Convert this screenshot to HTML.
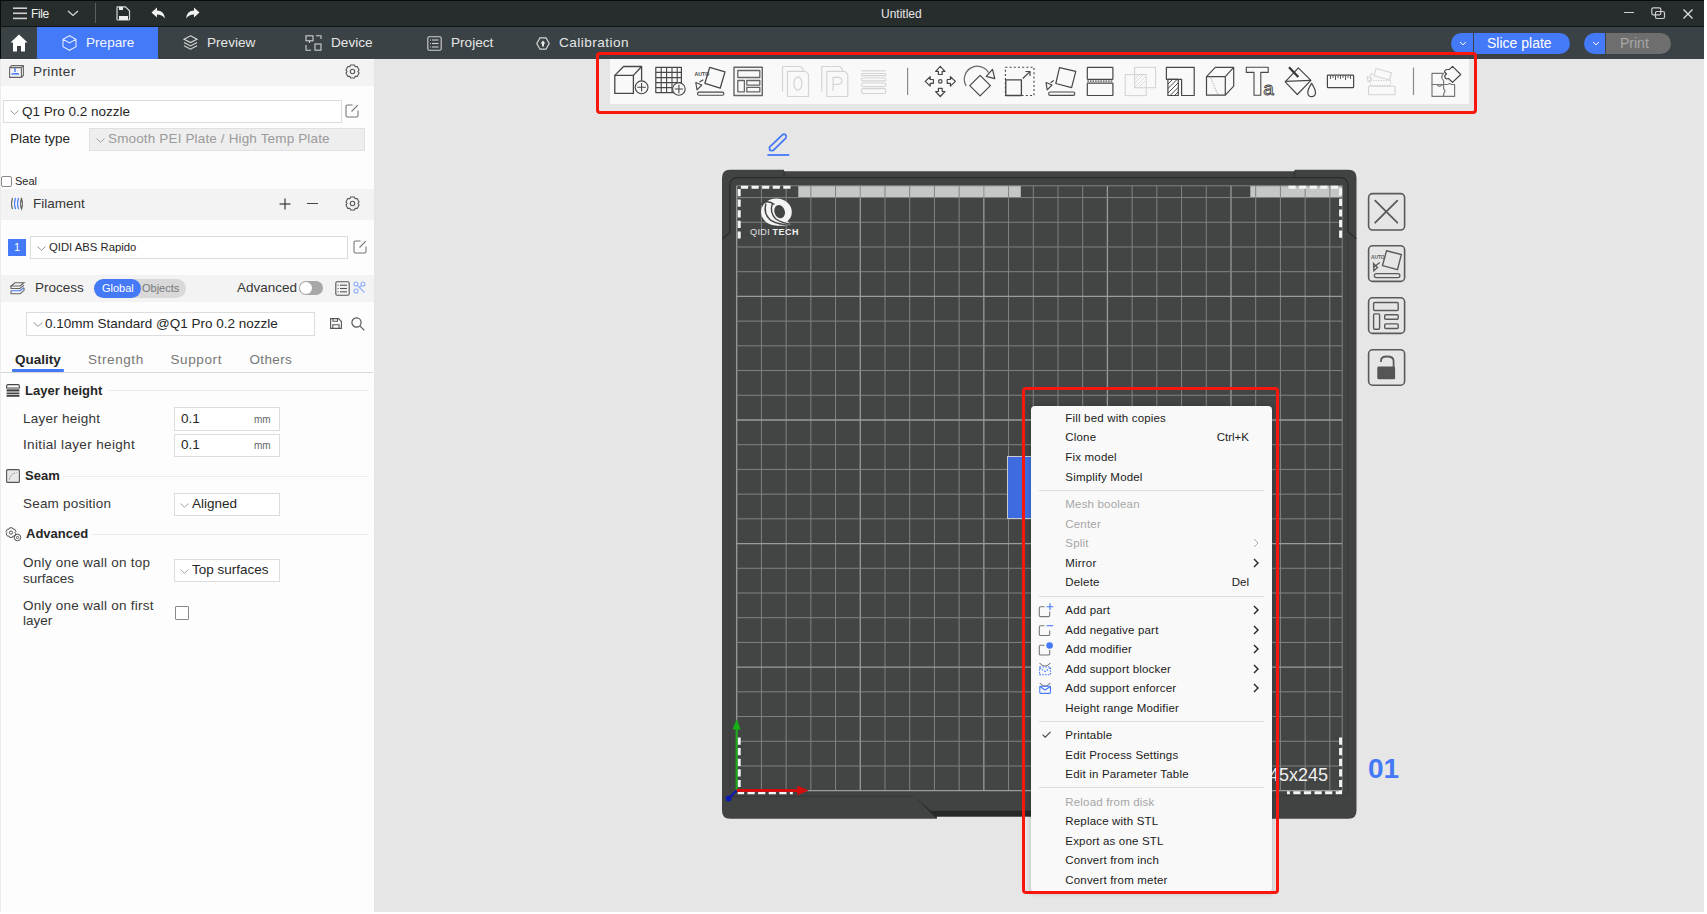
<!DOCTYPE html>
<html><head><meta charset="utf-8">
<style>
*{box-sizing:border-box;margin:0;padding:0}
html,body{width:1707px;height:914px;overflow:hidden;background:#fff;font-family:"Liberation Sans",sans-serif}
.a{position:absolute}
.t{position:absolute;white-space:nowrap;line-height:1}
svg{position:absolute;overflow:visible}
</style></head>
<body>
<!-- title bar -->
<div class="a" style="left:0;top:0;width:1704px;height:27px;background:#272c2d;border-top:1px solid #0a0c0c;border-left:1px solid #0a0c0c;border-bottom:1px solid #111415"></div>
<!-- nav bar -->
<div class="a" style="left:0;top:27px;width:1704px;height:32px;background:#3b4245;border-left:1px solid #0a0c0c"></div>
<div class="a" style="left:37px;top:27px;width:121px;height:32px;background:#4479f7"></div>
<!-- left panel -->
<div class="a" style="left:0;top:59px;width:374px;height:853px;background:#fdfdfd;border-left:1px solid #ececec"></div>
<!-- canvas -->
<div class="a" style="left:374px;top:59px;width:1330px;height:853px;background:#e6e6e6"></div>

<!-- section bands -->
<div class="a" style="left:1px;top:60px;width:373px;height:26px;background:#f3f3f3"></div>
<div class="a" style="left:1px;top:189px;width:373px;height:30.5px;background:#f3f3f3"></div>
<div class="a" style="left:1px;top:275px;width:373px;height:26.5px;background:#f3f3f3"></div>


<!-- ===== TITLE BAR CONTENT ===== -->
<svg style="left:13px;top:7px" width="15" height="13" viewBox="0 0 15 13"><g stroke="#d0d0d0" stroke-width="1.6"><line x1="0" y1="1.2" x2="14" y2="1.2"/><line x1="0" y1="6.3" x2="14" y2="6.3"/><line x1="0" y1="11.4" x2="14" y2="11.4"/></g></svg>
<div class="t" style="left:31px;top:8px;font-size:12px;color:#f0f0f0;letter-spacing:-0.4px">File</div>
<svg style="left:67px;top:10px" width="12" height="7" viewBox="0 0 12 7"><polyline points="1,1 6,5.5 11,1" fill="none" stroke="#d8d8d8" stroke-width="1.3"/></svg>
<div class="a" style="left:95px;top:3px;width:1px;height:20px;background:#5a5f60"></div>
<svg style="left:116px;top:6px" width="15" height="15" viewBox="0 0 15 15"><path d="M1,1.5 Q1,0.8 1.7,0.8 H9.5 L13.5,4.8 V13.3 Q13.5,14 12.8,14 H1.7 Q1,14 1,13.3 Z" fill="none" stroke="#d8d8d8" stroke-width="1.2"/><rect x="3" y="1" width="4" height="3" fill="#eee"/><rect x="3" y="10" width="9" height="4" fill="#eee"/></svg>
<svg style="left:151px;top:7px" width="15" height="12" viewBox="0 0 15 12"><path d="M0.5,5.5 L6,0.5 V3.5 Q13,3.5 14,11.5 Q11,7.5 6,7.5 V10.5 Z" fill="#f2f2f2"/></svg>
<svg style="left:185px;top:7px" width="15" height="12" viewBox="0 0 15 12"><path d="M14.5,5.5 L9,0.5 V3.5 Q2,3.5 1,11.5 Q4,7.5 9,7.5 V10.5 Z" fill="#f2f2f2"/></svg>
<div class="t" style="left:881px;top:8px;font-size:12px;color:#e8e8e8">Untitled</div>
<div class="a" style="left:1624px;top:12px;width:10px;height:1.3px;background:#d0d0d0"></div>
<svg style="left:1651px;top:7px" width="15" height="13" viewBox="0 0 15 13"><rect x="0.8" y="0.8" width="9" height="7" rx="1.5" fill="none" stroke="#cfcfcf" stroke-width="1.2"/><rect x="4.5" y="4.5" width="9" height="7" rx="1.5" fill="none" stroke="#cfcfcf" stroke-width="1.2"/></svg>
<svg style="left:1683px;top:9px" width="10" height="10" viewBox="0 0 10 10"><g stroke="#e0e0e0" stroke-width="1.2"><line x1="0.5" y1="0.5" x2="9.5" y2="9.5"/><line x1="9.5" y1="0.5" x2="0.5" y2="9.5"/></g></svg>

<!-- ===== NAV BAR CONTENT ===== -->
<svg style="left:10px;top:34px" width="18" height="18" viewBox="0 0 18 18"><path d="M9,0.5 L17.5,8.5 H15 V17.5 H11 V12 H7 V17.5 H3 V8.5 H0.5 Z" fill="#fff"/></svg>
<svg style="left:62px;top:35px" width="15" height="16" viewBox="0 0 15 16"><path d="M7.5,0.7 L14,4.3 V11.7 L7.5,15.3 L1,11.7 V4.3 Z M1,4.3 L7.5,7.9 L14,4.3" fill="none" stroke="#dfe8ff" stroke-width="1.1"/></svg>
<div class="t" style="left:86px;top:36px;font-size:13.6px;color:#f4f7ff">Prepare</div>
<svg style="left:183px;top:35px" width="15" height="16" viewBox="0 0 15 16"><path d="M7.5,0.8 L14,4.2 L7.5,7.6 L1,4.2 Z" fill="none" stroke="#d8d8d8" stroke-width="1.1"/><path d="M1,7.5 L7.5,10.9 L14,7.5 M1,10.8 L7.5,14.2 L14,10.8" fill="none" stroke="#d8d8d8" stroke-width="1.1"/></svg>
<div class="t" style="left:207px;top:36px;font-size:13.6px;color:#e6e6e6">Preview</div>
<svg style="left:305px;top:35px" width="17" height="16" viewBox="0 0 17 16"><g fill="none" stroke="#d0d0d0" stroke-width="1.1"><rect x="1" y="0.8" width="7" height="5" /><line x1="4.5" y1="5.8" x2="4.5" y2="8"/><rect x="10" y="9" width="6" height="6.2"/><polyline points="11,0.8 16,0.8 16,4"/><polyline points="1,10 1,15.2 6,15.2"/></g></svg>
<div class="t" style="left:331px;top:36px;font-size:13.6px;color:#e6e6e6">Device</div>
<svg style="left:427px;top:36px" width="15" height="15" viewBox="0 0 15 15"><g fill="none" stroke="#d0d0d0" stroke-width="1.1"><rect x="0.8" y="0.8" width="13.4" height="13.4" rx="1.5"/><line x1="5" y1="4" x2="11.5" y2="4"/><line x1="5" y1="7.5" x2="11.5" y2="7.5"/><line x1="5" y1="11" x2="11.5" y2="11"/><line x1="3" y1="4" x2="4" y2="4"/><line x1="3" y1="7.5" x2="4" y2="7.5"/><line x1="3" y1="11" x2="4" y2="11"/></g></svg>
<div class="t" style="left:451px;top:36px;font-size:13.6px;color:#e6e6e6">Project</div>
<svg style="left:536px;top:37px" width="14" height="13" viewBox="0 0 14 13"><path d="M4,0.8 H10 L13.2,6.5 L10,12.2 H4 L0.8,6.5 Z" fill="none" stroke="#d8d8d8" stroke-width="1.2"/><path d="M7,3.5 L9.5,6.5 H8 V9.5 H6 V6.5 H4.5 Z" fill="#e8e8e8"/></svg>
<div class="t" style="left:559px;top:36px;font-size:13.6px;color:#e6e6e6;letter-spacing:0.45px">Calibration</div>

<!-- slice / print buttons -->
<div class="a" style="left:1451px;top:33px;width:22px;height:21px;background:#4479f7;border-radius:11px 0 0 11px"></div>
<div class="a" style="left:1474px;top:33px;width:96px;height:21px;background:#4479f7;border-radius:0 11px 11px 0"></div>
<svg style="left:1459px;top:41px" width="8" height="5" viewBox="0 0 8 5"><polyline points="1,1 4,3.8 7,1" fill="none" stroke="#fff" stroke-width="1"/></svg>
<div class="t" style="left:1487px;top:36px;font-size:14px;color:#fff">Slice plate</div>
<div class="a" style="left:1584px;top:33px;width:21px;height:21px;background:#4479f7;border-radius:11px 0 0 11px"></div>
<div class="a" style="left:1606px;top:33px;width:65px;height:21px;background:#6e6e6e;border-radius:0 11px 11px 0"></div>
<svg style="left:1592px;top:41px" width="8" height="5" viewBox="0 0 8 5"><polyline points="1,1 4,3.8 7,1" fill="none" stroke="#fff" stroke-width="1"/></svg>
<div class="t" style="left:1620px;top:36px;font-size:14px;color:#a9a9a9">Print</div>


<!-- ===== LEFT PANEL CONTENT ===== -->
<!-- Printer -->
<svg style="left:9px;top:65px" width="15" height="13" viewBox="0 0 15 13"><g fill="none" stroke="#666" stroke-width="1.1"><path d="M0.6,2.6 L2.6,0.6 H14.4 V10.4 L12.4,12.4 H0.6 Z M0.6,2.6 H12.4 V12.4 M12.4,2.6 L14.4,0.6"/></g><path d="M6,3 V7 M2.5,9 Q6,8.6 10,9" stroke="#4479f7" stroke-width="1.4" fill="none"/></svg>
<div class="t" style="left:33px;top:65px;font-size:13.5px;color:#363636;letter-spacing:0.4px">Printer</div>
<svg style="left:345px;top:64px" width="15" height="15" viewBox="0 0 15 15"><path d="M5.6,1 H9.4 L10.2,2.8 L12.2,2.6 L14.1,5.9 L12.9,7.5 L14.1,9.1 L12.2,12.4 L10.2,12.2 L9.4,14 H5.6 L4.8,12.2 L2.8,12.4 L0.9,9.1 L2.1,7.5 L0.9,5.9 L2.8,2.6 L4.8,2.8 Z" fill="none" stroke="#555" stroke-width="1.1" stroke-linejoin="round"/><circle cx="7.5" cy="7.5" r="2.2" fill="none" stroke="#555" stroke-width="1.1"/></svg>

<div class="a" style="left:3px;top:100px;width:339px;height:23px;border:1px solid #dcdcdc;background:#fff"></div>
<svg style="left:10px;top:110px" width="9" height="5" viewBox="0 0 9 5"><polyline points="0.5,0.5 4.5,4.3 8.5,0.5" fill="none" stroke="#888" stroke-width="0.9"/></svg>
<div class="t" style="left:22px;top:105px;font-size:13.5px;color:#262626">Q1 Pro 0.2 nozzle</div>
<svg style="left:345px;top:104px" width="14" height="14" viewBox="0 0 14 14"><path d="M7.5,1 H2.5 Q1,1 1,2.5 V11.5 Q1,13 2.5,13 H11.5 Q13,13 13,11.5 V6.5" fill="none" stroke="#777" stroke-width="1.1"/><line x1="6.5" y1="7.5" x2="12.8" y2="1.2" stroke="#777" stroke-width="1.1"/></svg>

<div class="t" style="left:10px;top:132px;font-size:13.5px;color:#262626">Plate type</div>
<div class="a" style="left:89px;top:128px;width:276px;height:23px;border:1px solid #e0e0e0;background:#eeeeee"></div>
<svg style="left:96px;top:138px" width="9" height="5" viewBox="0 0 9 5"><polyline points="0.5,0.5 4.5,4.3 8.5,0.5" fill="none" stroke="#999" stroke-width="0.9"/></svg>
<div class="t" style="left:108px;top:132px;font-size:13.5px;color:#9a9a9a;letter-spacing:0.15px">Smooth PEI Plate / High Temp Plate</div>

<div class="a" style="left:1px;top:176px;width:11px;height:11px;border:1px solid #8a8a8a;border-radius:2px;background:#fff"></div>
<div class="t" style="left:15px;top:176px;font-size:11px;color:#262626">Seal</div>

<!-- Filament -->
<svg style="left:10px;top:197px" width="14" height="13" viewBox="0 0 14 13"><g fill="none" stroke-width="1.1"><path d="M2.5,0.8 Q0.6,6.5 2.5,12.2" stroke="#666"/><path d="M5.5,0.8 Q3.6,6.5 5.5,12.2" stroke="#4479f7"/><path d="M8.5,0.8 Q6.6,6.5 8.5,12.2" stroke="#4479f7"/><path d="M11.5,0.8 Q13.4,6.5 11.5,12.2 Q9.6,6.5 11.5,0.8" stroke="#666"/></g></svg>
<div class="t" style="left:33px;top:197px;font-size:13.5px;color:#363636">Filament</div>
<svg style="left:279px;top:198px" width="12" height="12" viewBox="0 0 12 12"><g stroke="#444" stroke-width="1.3"><line x1="6" y1="0.5" x2="6" y2="11.5"/><line x1="0.5" y1="6" x2="11.5" y2="6"/></g></svg>
<div class="a" style="left:307px;top:203px;width:11px;height:1.3px;background:#444"></div>
<svg style="left:345px;top:196px" width="15" height="15" viewBox="0 0 15 15"><path d="M5.6,1 H9.4 L10.2,2.8 L12.2,2.6 L14.1,5.9 L12.9,7.5 L14.1,9.1 L12.2,12.4 L10.2,12.2 L9.4,14 H5.6 L4.8,12.2 L2.8,12.4 L0.9,9.1 L2.1,7.5 L0.9,5.9 L2.8,2.6 L4.8,2.8 Z" fill="none" stroke="#555" stroke-width="1.1" stroke-linejoin="round"/><circle cx="7.5" cy="7.5" r="2.2" fill="none" stroke="#555" stroke-width="1.1"/></svg>

<div class="a" style="left:8px;top:239px;width:18px;height:17px;background:#4479f7"></div>
<div class="t" style="left:14px;top:242px;font-size:11px;color:#fff">1</div>
<div class="a" style="left:30px;top:236px;width:318px;height:23px;border:1px solid #dcdcdc;background:#fff"></div>
<svg style="left:37px;top:246px" width="9" height="5" viewBox="0 0 9 5"><polyline points="0.5,0.5 4.5,4.3 8.5,0.5" fill="none" stroke="#888" stroke-width="0.9"/></svg>
<div class="t" style="left:49px;top:241.5px;font-size:11.3px;color:#262626">QIDI ABS Rapido</div>
<svg style="left:353px;top:240px" width="14" height="14" viewBox="0 0 14 14"><path d="M7.5,1 H2.5 Q1,1 1,2.5 V11.5 Q1,13 2.5,13 H11.5 Q13,13 13,11.5 V6.5" fill="none" stroke="#777" stroke-width="1.1"/><line x1="6.5" y1="7.5" x2="12.8" y2="1.2" stroke="#777" stroke-width="1.1"/></svg>

<!-- Process -->
<svg style="left:10px;top:282px" width="15" height="13" viewBox="0 0 15 13"><g fill="none" stroke-width="1.1"><path d="M1,4 L5,0.8 H14 L10,4 Z" stroke="#666"/><path d="M1,4 V6.5 H10 L14,3.3" stroke="#666"/><path d="M1,8.8 H10 L14,5.6" stroke="#4479f7"/><path d="M1,8.8 V11.8 H10 L14,8.6 V6" stroke="#666"/></g></svg>
<div class="t" style="left:35px;top:281px;font-size:13.5px;color:#363636">Process</div>
<div class="a" style="left:94px;top:279px;width:92px;height:19px;background:#d9d9d9;border-radius:10px"></div>
<div class="a" style="left:94px;top:279px;width:47px;height:19px;background:#4479f7;border-radius:10px"></div>
<div class="t" style="left:102px;top:283px;font-size:11px;color:#fff">Global</div>
<div class="t" style="left:142px;top:283px;font-size:11px;color:#777">Objects</div>
<div class="t" style="left:237px;top:281px;font-size:13.5px;color:#363636">Advanced</div>
<div class="a" style="left:299px;top:281px;width:24px;height:14px;background:#a8a8a8;border-radius:7px"></div>
<div class="a" style="left:300px;top:282px;width:12px;height:12px;background:#fff;border-radius:6px"></div>
<svg style="left:335px;top:281px" width="15" height="15" viewBox="0 0 15 15"><g fill="none" stroke="#555" stroke-width="1.1"><rect x="0.8" y="0.8" width="13.4" height="13.4" rx="1.5"/><line x1="5" y1="4.2" x2="12" y2="4.2"/><line x1="5" y1="7.5" x2="12" y2="7.5"/><line x1="5" y1="10.8" x2="12" y2="10.8"/><line x1="2.6" y1="4.2" x2="3.6" y2="4.2"/><line x1="2.6" y1="7.5" x2="3.6" y2="7.5"/><line x1="2.6" y1="10.8" x2="3.6" y2="10.8"/></g></svg>
<svg style="left:353px;top:281px" width="13" height="13" viewBox="0 0 13 13"><g fill="none" stroke="#8fb0fb" stroke-width="1.1"><circle cx="3" cy="3" r="2"/><circle cx="10" cy="3" r="2"/><circle cx="3" cy="10" r="2"/><line x1="4.5" y1="4.5" x2="11.5" y2="11.5"/><line x1="8.5" y1="4.5" x2="6" y2="7"/></g></svg>

<div class="a" style="left:26px;top:312px;width:289px;height:24px;border:1px solid #dcdcdc;background:#fff"></div>
<svg style="left:33px;top:322px" width="10" height="5" viewBox="0 0 10 5"><polyline points="0.5,0.5 5,4.3 9.5,0.5" fill="none" stroke="#888" stroke-width="0.9"/></svg>
<div class="t" style="left:45px;top:317px;font-size:13.5px;color:#262626">0.10mm Standard @Q1 Pro 0.2 nozzle</div>
<svg style="left:330px;top:318px" width="12" height="11" viewBox="0 0 12 11"><g fill="none" stroke="#555" stroke-width="1.1"><path d="M0.6,0.6 H8.5 L11.4,3.5 V10.4 H0.6 Z"/><path d="M3,0.6 V3.2 H7.5 V0.6"/><path d="M2.8,10.4 V6.8 H9 V10.4"/></g></svg>
<svg style="left:351px;top:317px" width="14" height="14" viewBox="0 0 14 14"><g fill="none" stroke="#555" stroke-width="1.2"><circle cx="5.5" cy="5.5" r="4.6"/><line x1="8.9" y1="8.9" x2="13.3" y2="13.3"/></g></svg>

<!-- tabs -->
<div class="t" style="left:15px;top:353px;font-size:13.5px;color:#262626;font-weight:bold">Quality</div>
<div class="a" style="left:12px;top:369px;width:52px;height:2.5px;background:#4479f7;border-radius:1px"></div>
<div class="t" style="left:88px;top:353px;font-size:13.5px;color:#777;letter-spacing:0.6px">Strength</div>
<div class="t" style="left:170.5px;top:353px;font-size:13.5px;color:#777;letter-spacing:0.6px">Support</div>
<div class="t" style="left:249.5px;top:353px;font-size:13.5px;color:#777;letter-spacing:0.35px">Others</div>
<div class="a" style="left:1px;top:372px;width:372px;height:1px;background:#d8d8d8"></div>

<!-- Layer height section -->
<svg style="left:6px;top:384px" width="14" height="13" viewBox="0 0 14 13"><path d="M2,0.6 H12 Q13.4,0.6 13.4,2.5 V4 H0.6 V2.5 Q0.6,0.6 2,0.6 Z" fill="none" stroke="#444" stroke-width="1.1"/><rect x="0.6" y="5.3" width="12.8" height="2.2" fill="#444"/><rect x="0.6" y="8.5" width="12.8" height="1.8" fill="#444"/><rect x="0.6" y="11" width="12.8" height="1.8" fill="#444"/></svg>
<div class="t" style="left:25px;top:384px;font-size:13px;color:#262626;font-weight:bold">Layer height</div>
<div class="a" style="left:108px;top:390px;width:261px;height:1px;background:#ececec"></div>
<div class="t" style="left:23px;top:412px;font-size:13.5px;color:#363636;letter-spacing:0.25px">Layer height</div>
<div class="a" style="left:174px;top:407px;width:106px;height:24px;border:1px solid #dcdcdc;background:#fff"></div>
<div class="t" style="left:181px;top:412px;font-size:13.5px;color:#262626">0.1</div>
<div class="t" style="left:254px;top:415px;font-size:10px;color:#666">mm</div>
<div class="t" style="left:23px;top:438px;font-size:13.5px;color:#363636;letter-spacing:0.35px">Initial layer height</div>
<div class="a" style="left:174px;top:434px;width:106px;height:23px;border:1px solid #dcdcdc;background:#fff"></div>
<div class="t" style="left:181px;top:438px;font-size:13.5px;color:#262626">0.1</div>
<div class="t" style="left:254px;top:441px;font-size:10px;color:#666">mm</div>

<!-- Seam -->
<svg style="left:6px;top:469px" width="14" height="14" viewBox="0 0 14 14"><rect x="0.6" y="0.6" width="12.8" height="12.8" rx="1" fill="#e8e8e8" stroke="#555" stroke-width="1.1"/><path d="M3.5,10.5 Q4,5 10.5,3.5" fill="none" stroke="#888" stroke-width="1" stroke-dasharray="1.5,1"/></svg>
<div class="t" style="left:25px;top:469px;font-size:13px;color:#262626;font-weight:bold">Seam</div>
<div class="a" style="left:63px;top:476px;width:306px;height:1px;background:#ececec"></div>
<div class="t" style="left:23px;top:497px;font-size:13.5px;color:#363636;letter-spacing:0.2px">Seam position</div>
<div class="a" style="left:174px;top:493px;width:106px;height:23px;border:1px solid #dcdcdc;background:#fff"></div>
<svg style="left:180px;top:503px" width="9" height="5" viewBox="0 0 9 5"><polyline points="0.5,0.5 4.5,4.3 8.5,0.5" fill="none" stroke="#999" stroke-width="0.9"/></svg>
<div class="t" style="left:192px;top:497px;font-size:13.5px;color:#262626">Aligned</div>

<!-- Advanced -->
<svg style="left:5px;top:527px" width="17" height="15" viewBox="0 0 17 15"><g fill="none" stroke="#555" stroke-width="1"><path d="M4.6,0.8 H7.4 L8,2.2 L9.5,2 L10.9,4.4 L10,5.6 L10.9,6.8 L9.5,9.2 L8,9 L7.4,10.4 H4.6 L4,9 L2.5,9.2 L1.1,6.8 L2,5.6 L1.1,4.4 L2.5,2 L4,2.2 Z"/><circle cx="6" cy="5.6" r="1.6"/><circle cx="12.5" cy="10.5" r="3.3"/><circle cx="12.5" cy="10.5" r="1.1"/></g></svg>
<div class="t" style="left:26px;top:527px;font-size:13px;color:#262626;font-weight:bold">Advanced</div>
<div class="a" style="left:92px;top:534px;width:277px;height:1px;background:#ececec"></div>
<div class="t" style="left:23px;top:556px;font-size:13.5px;color:#363636;letter-spacing:0.25px">Only one wall on top</div>
<div class="t" style="left:23px;top:572px;font-size:13.5px;color:#363636">surfaces</div>
<div class="a" style="left:174px;top:559px;width:106px;height:23px;border:1px solid #dcdcdc;background:#fff"></div>
<svg style="left:180px;top:569px" width="9" height="5" viewBox="0 0 9 5"><polyline points="0.5,0.5 4.5,4.3 8.5,0.5" fill="none" stroke="#999" stroke-width="0.9"/></svg>
<div class="t" style="left:192px;top:563px;font-size:13.5px;color:#262626">Top surfaces</div>
<div class="t" style="left:23px;top:599px;font-size:13.5px;color:#363636;letter-spacing:0.25px">Only one wall on first</div>
<div class="t" style="left:23px;top:614px;font-size:13.5px;color:#363636">layer</div>
<div class="a" style="left:175px;top:606px;width:14px;height:14px;border:1px solid #8a8a8a;border-radius:1px;background:#fff"></div>


<!-- ===== TOOLBAR ===== -->
<div class="a" style="left:610px;top:59px;width:859px;height:45px;background:#f9f9f9"></div>
<svg style="left:600px;top:60px" width="880" height="45" viewBox="600 60 880 45">
<g fill="none" stroke="#474747" stroke-width="1.3" stroke-linejoin="round">
 <!-- 1 add cube -->
 <rect x="614.8" y="75.4" width="18.6" height="18"/>
 <path d="M614.8,75.4 L623.6,66.5 H641.6 L633.4,75.4 M641.6,66.5 V80.6"/>
 <circle cx="641.6" cy="87.3" r="6.4" fill="#f8f8f8" stroke-width="1.1"/>
 <path d="M641.6,83 V91.6 M637.3,87.3 H645.9" stroke-width="1.1"/>
 <!-- 2 plate grid -->
 <rect x="655.8" y="67.4" width="25.6" height="25.2" stroke-width="1.2"/>
 <path d="M661.2,67.4 V92.6 M666.6,67.4 V92.6 M672,67.4 V92.6 M677.2,67.4 V92.6 M655.8,72.4 H681.4 M655.8,77.6 H681.4 M655.8,82.6 H681.4 M655.8,87.6 H681.4" stroke-width="1.1"/>
 <circle cx="678.9" cy="89" r="6.3" fill="#f8f8f8" stroke-width="1.1"/>
 <path d="M678.9,84.8 V93.2 M674.7,89 H683.1" stroke-width="1.1"/>
 <!-- 3 auto orient -->
 <path d="M709.7,67.4 L725,71.9 L720.2,88.2 L704.9,83.3 Z"/>
 <path d="M703.3,79.8 L699.5,82"/>
 <path d="M695.8,82.6 L701.8,85 L697,89.8 Z" stroke-width="1.1"/>
 <rect x="697.5" y="92.1" width="26.4" height="3.2" rx="1.6" stroke-width="1.1"/>
 <!-- 4 arrange -->
 <rect x="734" y="67.3" width="28.3" height="28.2" stroke="#666" stroke-width="1.4"/>
 <rect x="737.8" y="70.5" width="22" height="7" stroke="#666" stroke-width="1.3"/>
 <rect x="737.8" y="80.5" width="6.6" height="11.4" stroke="#666" stroke-width="1.3"/>
 <rect x="746.8" y="80.5" width="13" height="4.6" stroke="#666" stroke-width="1.3"/>
 <rect x="746.8" y="87.3" width="13" height="4.6" stroke="#666" stroke-width="1.3"/>
</g>
<text x="694.6" y="76.3" font-family="Liberation Sans" font-size="5.2" font-weight="bold" fill="#474747">AUTO</text>
<g fill="none" stroke="#d4d4d4" stroke-width="1.2" stroke-linejoin="round">
 <!-- 5 copy 0 -->
 <path d="M782.5,91.5 V66.5 H800.5 L803,69 V71.3"/>
 <path d="M787.5,71.3 H805.5 L808.5,74.3 V96.5 H787.5 Z"/>
 <ellipse cx="797.9" cy="83.5" rx="4" ry="6.6"/>
 <!-- 6 copy P -->
 <path d="M821.8,91.5 V66.5 H839.8 L842.3,69 V71.3"/>
 <path d="M826.8,71.3 H844.8 L847.8,74.3 V96.5 H826.8 Z"/>
 <path d="M833.1,91 V77.3 H838.3 Q842,77.3 842,80.8 Q842,84.3 838.3,84.3 H833.1"/>
 <!-- 7 layers -->
 <line x1="861.5" y1="70.8" x2="885.8" y2="70.8"/>
 <rect x="861.5" y="73.5" width="24.3" height="2.2" rx="1"/>
 <rect x="861.5" y="78" width="24.3" height="2.8" rx="1.2"/>
 <rect x="861.5" y="83" width="24.3" height="3.6" rx="1.5"/>
 <rect x="861.5" y="88.7" width="24.3" height="4.8" rx="1.8"/>
</g>
<line x1="907.6" y1="67.7" x2="907.6" y2="95" stroke="#8a8a8a" stroke-width="1.2"/>
<g fill="none" stroke="#474747" stroke-width="1.2" stroke-linejoin="round">
 <!-- 8 move -->
 <path d="M940.3,66.3 L945,71.3 H942.2 V74.5 H938.4 V71.3 H935.6 Z"/>
 <path d="M940.3,96.5 L945,91.5 H942.2 V88.3 H938.4 V91.5 H935.6 Z"/>
 <path d="M925.2,81.4 L930.2,76.7 V79.5 H933.4 V83.3 H930.2 V86.1 Z"/>
 <path d="M955.4,81.4 L950.4,76.7 V79.5 H947.2 V83.3 H950.4 V86.1 Z"/>
 <circle cx="940.3" cy="81.4" r="1.7"/>
 <!-- 9 rotate -->
 <path d="M966.2,86 A13,13 0 0 1 988.5,72.5" stroke="#666"/>
 <path d="M986.2,76.3 L994.8,78.6 L992.5,69.3 Z"/>
 <path d="M980.1,75.3 L990.4,85.6 L980.1,95.9 L969.8,85.6 Z"/>
 <!-- 10 scale -->
 <rect x="1005.4" y="67.3" width="28.6" height="28.2" stroke-dasharray="2,2.2" stroke-width="1.1"/>
 <rect x="1005.8" y="79.8" width="15.6" height="15.7" stroke-width="1.3"/>
 <path d="M1022.8,78.5 L1029.6,71.9 M1025.5,71.5 H1030 V76"/>
 <!-- 11 lay on face -->
 <path d="M1059.5,67.7 L1075.8,71.3 L1071.6,87.7 L1055.8,83.5 Z"/>
 <path d="M1053.8,80.4 L1050.5,82.8"/>
 <path d="M1046,82.6 L1052,85 L1047.2,89.8 Z" stroke-width="1.1"/>
 <rect x="1048.6" y="92" width="26.2" height="3.4" rx="1.7" stroke-width="1.1"/>
 <!-- 12 cut -->
 <rect x="1087.3" y="67.3" width="25.6" height="12" rx="0.6"/>
 <rect x="1087.3" y="83.1" width="25.6" height="12.4" rx="0.6"/>
 <line x1="1087.3" y1="81.1" x2="1112.9" y2="81.1" stroke-dasharray="1.6,1" stroke-width="1.6" stroke="#777"/>
</g>
<g fill="none" stroke="#d4d4d4" stroke-width="1.1">
 <!-- 13 boolean -->
 <rect x="1134.6" y="67.3" width="21" height="20.4"/>
 <rect x="1125.2" y="74.6" width="21" height="21"/>
 <path d="M1135,79 L1139,75 M1135,83 L1143,75 M1135,87 L1145,77 M1139,87 L1145,81" stroke-width="0.8"/>
</g>
<g fill="none" stroke="#474747" stroke-width="1.2" stroke-linejoin="round">
 <!-- 14 support -->
 <path d="M1166.4,67.3 H1194.2 V95.5 H1181.6 V79.3 H1166.4 Z"/>
 <rect x="1167.9" y="79.3" width="10.4" height="16.2" fill="#fff"/>
 <path d="M1168,84 L1172.6,79.4 M1168,88.5 L1177.2,79.4 M1168,93 L1178.2,82.8 M1170.2,95.4 L1178.2,87.4 M1174.7,95.4 L1178.2,91.9" stroke-width="1"/>
 <!-- 15 seam cube -->
 <rect x="1206.5" y="76.6" width="18.8" height="18.6"/>
 <path d="M1206.5,76.6 L1215.3,67.4 H1233.7 L1225.3,76.6 M1233.7,67.4 V86.1 L1225.3,95.2"/>
 <path d="M1211,78.4 Q1214,86 1217.9,94.5" stroke-dasharray="1,1.6" stroke-width="0.9" stroke="#777"/>
 <!-- 16 text -->
 <path d="M1246.3,67.3 H1268.2 V72.4 H1260.8 V95.2 H1254 V72.4 H1246.3 Z" stroke-width="1.1"/>
 <!-- 17 paint -->
 <path d="M1298.3,67.8 L1310.9,80.4 L1297.3,94.5 L1285.2,81.9 Z"/>
 <line x1="1285.2" y1="81.4" x2="1310.9" y2="80.4"/>
 <line x1="1289" y1="67.2" x2="1298.3" y2="77" stroke-width="2.2" stroke="#333"/>
 <path d="M1311.6,83.3 Q1307.6,89.5 1307.8,92.7 Q1308,96.6 1311.6,96.6 Q1315.4,96.6 1315.5,92.7 Q1315.6,89.5 1311.6,83.3 Z"/>
 <!-- 18 ruler -->
 <rect x="1327.4" y="75.1" width="26.2" height="12.6" rx="0.6"/>
 <path d="M1330.5,75.5 V79 M1333,75.5 V78 M1335.5,75.5 V80 M1338,75.5 V78 M1340.5,75.5 V79 M1343,75.5 V78 M1345.5,75.5 V80 M1348,75.5 V78 M1350.5,75.5 V79" stroke-width="0.9"/>
</g>
<text x="1263.2" y="95.2" font-family="Liberation Sans" font-size="19" fill="#f8f8f8" stroke="#474747" stroke-width="0.9">a</text>
<g fill="none" stroke="#d4d4d4" stroke-width="1.1" stroke-linejoin="round">
 <!-- 19 disabled assembly -->
 <path d="M1376,68.5 L1391.5,72.7 L1389.5,80 L1374,75.8 Z"/>
 <rect x="1370.5" y="80.5" width="20" height="5" stroke-dasharray="1.5,1"/>
 <rect x="1368.6" y="86.3" width="26.4" height="8.5"/>
 <path d="M1372.8,73.5 L1369.5,76 M1367,76.5 L1372,78.5 L1368.2,82 Z"/>
</g>
<line x1="1413.5" y1="67.6" x2="1413.5" y2="95" stroke="#8a8a8a" stroke-width="1.2"/>
<g fill="none" stroke="#474747" stroke-width="1.2" stroke-linejoin="round">
 <!-- 20 puzzle -->
 <path d="M1432,73.4 H1443.5 Q1441,76 1442,78.5 Q1443,80 1443.6,81 L1443.6,84.5 H1432 Z" stroke="#777"/>
 <path d="M1432,84.5 H1437 Q1438.5,87 1440.5,86 Q1442,85 1443.6,84.5 V89 Q1446,90.5 1444,93 Q1443.5,94.5 1443.6,96.3 H1432 Z" stroke="#777"/>
 <path d="M1443.6,84.5 H1448 Q1449.5,82.5 1451,84.5 H1454.6 V96.3 H1443.6" stroke="#777"/>
 <path d="M1452.5,66.3 L1460.7,74.5 L1452.5,82.4 L1448.5,78.5 Q1446,79.5 1445,77.5 Q1444,75.5 1446.5,74 L1444.5,72 Q1445,69.5 1447,69.5 Q1449,69.5 1449.4,69.4 Z"/>
</g>
</svg>
<!-- red box 1 -->
<div class="a" style="left:595.5px;top:52.2px;width:881.5px;height:61.8px;border:3.3px solid #f8170f;border-radius:4px"></div>


<!-- ===== PLATE ===== -->
<svg style="left:700px;top:160px" width="680" height="680" viewBox="700 160 680 680">
 <!-- outer frame -->
 <path d="M730,169.8 H784 V171.3 H1294.5 V169.8 H1348.5 Q1356.5,169.8 1356.5,177.8 V810.7 Q1356.5,818.7 1348.5,818.7 H1141.8 L1141.8,816.4 H936.7 V818.7 H730 Q722,818.7 722,810.7 V177.8 Q722,169.8 730,169.8 Z" fill="#414343"/>
 <!-- dark strip bottom middle -->
 <path d="M915,797 L936.7,818.7 V816.4 H1141.8 V810.8 H930.6 Z" fill="#272929"/>
 <line x1="730" y1="796.6" x2="913" y2="796.6" stroke="#383a3a" stroke-width="1"/>
 <!-- inner rim lines -->
 <path d="M722.3,238.7 L729.8,232.8 V186 Q729.8,177.7 738,177.7 H1340 Q1348.1,177.7 1348.1,186 V232 L1356.3,238.8" fill="none" stroke="#2a2c2c" stroke-width="1.3"/>
 <path d="M784,171.3 V177" stroke="#2f3131" stroke-width="1.2"/>
 <path d="M1294.5,171.3 V177" stroke="#2f3131" stroke-width="1.2"/>
 <path d="M729.8,240 V788 Q729.8,796 738,796 H913" fill="none" stroke="#3a3c3c" stroke-width="1"/>
 <path d="M1348.2,240 V788 Q1348.2,795.6 1340,795.6 H1141" fill="none" stroke="#3a3c3c" stroke-width="1"/>
 <!-- grid bg -->
 <rect x="736.7" y="185.8" width="605.5" height="604.9000000000001" fill="#434545"/>
 <!-- gray strips -->
 <rect x="798.3" y="185.8" width="222.5" height="11.6" fill="#c5c7c7"/>
 <rect x="1250.3" y="185.8" width="91.9" height="11.6" fill="#c5c7c7"/>
 <line x1="736.70" y1="185.8" x2="736.70" y2="790.7" stroke="#9a9c9c" stroke-width="1.3"/>
<line x1="761.41" y1="185.8" x2="761.41" y2="790.7" stroke="#818383" stroke-width="1"/>
<line x1="786.13" y1="185.8" x2="786.13" y2="790.7" stroke="#818383" stroke-width="1"/>
<line x1="810.84" y1="185.8" x2="810.84" y2="790.7" stroke="#818383" stroke-width="1"/>
<line x1="835.56" y1="185.8" x2="835.56" y2="790.7" stroke="#818383" stroke-width="1"/>
<line x1="860.27" y1="185.8" x2="860.27" y2="790.7" stroke="#9a9c9c" stroke-width="1.3"/>
<line x1="884.99" y1="185.8" x2="884.99" y2="790.7" stroke="#818383" stroke-width="1"/>
<line x1="909.70" y1="185.8" x2="909.70" y2="790.7" stroke="#818383" stroke-width="1"/>
<line x1="934.41" y1="185.8" x2="934.41" y2="790.7" stroke="#818383" stroke-width="1"/>
<line x1="959.13" y1="185.8" x2="959.13" y2="790.7" stroke="#818383" stroke-width="1"/>
<line x1="983.84" y1="185.8" x2="983.84" y2="790.7" stroke="#9a9c9c" stroke-width="1.3"/>
<line x1="1008.56" y1="185.8" x2="1008.56" y2="790.7" stroke="#818383" stroke-width="1"/>
<line x1="1033.27" y1="185.8" x2="1033.27" y2="790.7" stroke="#818383" stroke-width="1"/>
<line x1="1057.99" y1="185.8" x2="1057.99" y2="790.7" stroke="#818383" stroke-width="1"/>
<line x1="1082.70" y1="185.8" x2="1082.70" y2="790.7" stroke="#818383" stroke-width="1"/>
<line x1="1107.41" y1="185.8" x2="1107.41" y2="790.7" stroke="#9a9c9c" stroke-width="1.3"/>
<line x1="1132.13" y1="185.8" x2="1132.13" y2="790.7" stroke="#818383" stroke-width="1"/>
<line x1="1156.84" y1="185.8" x2="1156.84" y2="790.7" stroke="#818383" stroke-width="1"/>
<line x1="1181.56" y1="185.8" x2="1181.56" y2="790.7" stroke="#818383" stroke-width="1"/>
<line x1="1206.27" y1="185.8" x2="1206.27" y2="790.7" stroke="#818383" stroke-width="1"/>
<line x1="1230.99" y1="185.8" x2="1230.99" y2="790.7" stroke="#9a9c9c" stroke-width="1.3"/>
<line x1="1255.70" y1="185.8" x2="1255.70" y2="790.7" stroke="#818383" stroke-width="1"/>
<line x1="1280.41" y1="185.8" x2="1280.41" y2="790.7" stroke="#818383" stroke-width="1"/>
<line x1="1305.13" y1="185.8" x2="1305.13" y2="790.7" stroke="#818383" stroke-width="1"/>
<line x1="1329.84" y1="185.8" x2="1329.84" y2="790.7" stroke="#818383" stroke-width="1"/>
<line x1="1342.2" y1="185.8" x2="1342.2" y2="790.7" stroke="#818383" stroke-width="1"/>
<line x1="736.7" y1="790.70" x2="1342.2" y2="790.70" stroke="#9a9c9c" stroke-width="1.3"/>
<line x1="736.7" y1="765.99" x2="1342.2" y2="765.99" stroke="#818383" stroke-width="1"/>
<line x1="736.7" y1="741.27" x2="1342.2" y2="741.27" stroke="#818383" stroke-width="1"/>
<line x1="736.7" y1="716.56" x2="1342.2" y2="716.56" stroke="#818383" stroke-width="1"/>
<line x1="736.7" y1="691.84" x2="1342.2" y2="691.84" stroke="#818383" stroke-width="1"/>
<line x1="736.7" y1="667.13" x2="1342.2" y2="667.13" stroke="#9a9c9c" stroke-width="1.3"/>
<line x1="736.7" y1="642.41" x2="1342.2" y2="642.41" stroke="#818383" stroke-width="1"/>
<line x1="736.7" y1="617.70" x2="1342.2" y2="617.70" stroke="#818383" stroke-width="1"/>
<line x1="736.7" y1="592.99" x2="1342.2" y2="592.99" stroke="#818383" stroke-width="1"/>
<line x1="736.7" y1="568.27" x2="1342.2" y2="568.27" stroke="#818383" stroke-width="1"/>
<line x1="736.7" y1="543.56" x2="1342.2" y2="543.56" stroke="#9a9c9c" stroke-width="1.3"/>
<line x1="736.7" y1="518.84" x2="1342.2" y2="518.84" stroke="#818383" stroke-width="1"/>
<line x1="736.7" y1="494.13" x2="1342.2" y2="494.13" stroke="#818383" stroke-width="1"/>
<line x1="736.7" y1="469.41" x2="1342.2" y2="469.41" stroke="#818383" stroke-width="1"/>
<line x1="736.7" y1="444.70" x2="1342.2" y2="444.70" stroke="#818383" stroke-width="1"/>
<line x1="736.7" y1="419.99" x2="1342.2" y2="419.99" stroke="#9a9c9c" stroke-width="1.3"/>
<line x1="736.7" y1="395.27" x2="1342.2" y2="395.27" stroke="#818383" stroke-width="1"/>
<line x1="736.7" y1="370.56" x2="1342.2" y2="370.56" stroke="#818383" stroke-width="1"/>
<line x1="736.7" y1="345.84" x2="1342.2" y2="345.84" stroke="#818383" stroke-width="1"/>
<line x1="736.7" y1="321.13" x2="1342.2" y2="321.13" stroke="#818383" stroke-width="1"/>
<line x1="736.7" y1="296.41" x2="1342.2" y2="296.41" stroke="#9a9c9c" stroke-width="1.3"/>
<line x1="736.7" y1="271.70" x2="1342.2" y2="271.70" stroke="#818383" stroke-width="1"/>
<line x1="736.7" y1="246.99" x2="1342.2" y2="246.99" stroke="#818383" stroke-width="1"/>
<line x1="736.7" y1="222.27" x2="1342.2" y2="222.27" stroke="#818383" stroke-width="1"/>
<line x1="736.7" y1="197.56" x2="1342.2" y2="197.56" stroke="#818383" stroke-width="1"/>
<line x1="736.7" y1="185.8" x2="1342.2" y2="185.8" stroke="#818383" stroke-width="1"/>
 <!-- dashed corners -->
 <g stroke="#f4f4f4" stroke-width="3" fill="none" stroke-dasharray="7.2,3.4">
  <path d="M790.5,187.3 H739.2 V240"/>
  <path d="M1288.5,187.3 H1340.6 V240"/>
  <path d="M739.2,737.5 V792.8 H792.8"/>
  <path d="M1340.6,737.5 V792.8 H1287"/>
 </g>
 <!-- logo -->
 <ellipse cx="776.4" cy="212" rx="15.4" ry="13.4" fill="#f4f4f4"/>
 <path d="M776,225.4 Q786,226 793.2,225.2 Q789,223 786,220.5 Z" fill="#f4f4f4"/>
 <ellipse cx="779.6" cy="211.6" rx="5.2" ry="6.8" transform="rotate(-18 779.6 211.6)" fill="#434545"/>
 <path d="M760,204.8 Q767,199 774.5,204.5" fill="none" stroke="#434545" stroke-width="1.4"/>
 <path d="M765.8,203.6 Q763.2,214 770.5,220.2 Q777.5,224.8 793,225.6" fill="none" stroke="#434545" stroke-width="1.5"/>
 <path d="M772.3,203.8 Q769.5,212.5 775.5,218.7 Q781.5,223.2 792.5,224.2" fill="none" stroke="#434545" stroke-width="1.4"/>
 <text x="750" y="235.2" font-family="Liberation Sans" font-size="9.2" fill="#e0e0e0" letter-spacing="0.3">QIDI</text>
 <text x="772.6" y="235.2" font-family="Liberation Sans" font-size="9" font-weight="bold" fill="#f0f0f0" letter-spacing="0.5">TECH</text>
 <!-- axes -->
 <path d="M735.6,790.5 V729.5 H732.6 L736.6,719 L740.6,729.5 H737.6 V790.5 Z" fill="#16b016"/>
 <path d="M736.6,789 H797.3 V785.6 L808.5,790.5 L797.3,795.2 V791.9 H736.6 Z" fill="#d40d0d"/>
 <line x1="736.6" y1="790.5" x2="729" y2="798" stroke="#0b1ab0" stroke-width="2"/>
 <circle cx="728.6" cy="798.5" r="3" fill="#0b1ab0"/>
 <text x="1328" y="780.8" font-family="Liberation Sans" font-size="18" fill="#f0f0f0" text-anchor="end">245x245</text>
</svg>

<!-- pencil -->
<svg style="left:764px;top:130px" width="30" height="30" viewBox="764 130 30 30"><path d="M769.8,150.4 L769.5,147.2 L782.4,134.8 Q784.1,133.4 785.7,134.9 Q787.1,136.5 785.8,138.1 L773,150.6 Z" fill="none" stroke="#4479f7" stroke-width="1.8" stroke-linejoin="round"/><line x1="767.4" y1="155" x2="789.3" y2="155" stroke="#4479f7" stroke-width="1.8"/></svg>

<!-- side buttons -->
<svg style="left:1360px;top:185px" width="55" height="210" viewBox="1360 185 55 210">
 <g fill="none" stroke="#5a5a5a" stroke-width="1.6">
  <rect x="1368.6" y="193.6" width="36" height="36.4" rx="4"/>
  <path d="M1375.2,200.6 L1397.3,222.7 M1397.3,200.6 L1375.2,222.7" stroke-width="1.8" stroke-linecap="round"/>
  <rect x="1368.6" y="245.8" width="36" height="35.6" rx="4"/>
  <path d="M1386.5,250.8 L1401.3,254.6 L1397.5,269.6 L1382.5,265.6 Z" stroke-width="1.4"/>
  <rect x="1374.3" y="273.6" width="25.6" height="4" rx="2" stroke-width="1.3"/>
  <path d="M1374,267 L1379.7,262.5 M1373.5,263.5 L1377.5,267.5 L1373.8,270.8 Z" stroke-width="1.3"/>
  <rect x="1368.6" y="297.8" width="36" height="35.6" rx="4"/>
  <rect x="1373.6" y="302.5" width="24.6" height="8" rx="1" stroke-width="1.4"/>
  <rect x="1373.6" y="313.9" width="6" height="15.4" rx="1" stroke-width="1.4"/>
  <rect x="1384.7" y="314.7" width="13.5" height="4.6" rx="1" stroke-width="1.4"/>
  <rect x="1384.7" y="323.9" width="13.5" height="4.6" rx="1" stroke-width="1.4"/>
  <rect x="1368.6" y="349.8" width="36" height="35.4" rx="4"/>
  <path d="M1381,362 V360.5 Q1381,356.5 1387,356.5 Q1393.6,356.5 1393.6,361 V367" stroke-width="1.8"/>
 </g>
 <text x="1371" y="259" font-family="Liberation Sans" font-size="4.8" font-weight="bold" fill="#5a5a5a">AUTO</text>
 <rect x="1377.3" y="366.5" width="17.8" height="12.8" rx="1.4" fill="#555"/>
</svg>
<div class="t" style="left:1368px;top:755px;font-size:28px;font-weight:bold;color:#4479f7">01</div>

<!-- blue object -->
<div class="a" style="left:1007px;top:455.8px;width:30px;height:63.4px;background:#3e6be0;border:1px solid #c9cbd0"></div>

<!-- ===== CONTEXT MENU ===== -->
<div class="a" style="left:1029px;top:404px;width:245px;height:491px;border-radius:5px;background:rgba(0,0,0,0.10);filter:blur(1.5px)"></div>
<div class="a" style="left:1031px;top:405.7px;width:240.5px;height:486px;background:#f9f9f9;border-radius:4px"></div>
<div class="t" style="left:1065.3px;top:413.2px;font-size:11.5px;color:#1b1b1b;letter-spacing:0.18px">Fill bed with copies</div>
<div class="t" style="left:1065.3px;top:432.3px;font-size:11.5px;color:#1b1b1b;letter-spacing:0.18px">Clone</div>
<div class="t" style="right:458px;top:432.3px;font-size:11.5px;color:#1b1b1b">Ctrl+K</div>
<div class="t" style="left:1065.3px;top:452.0px;font-size:11.5px;color:#1b1b1b;letter-spacing:0.18px">Fix model</div>
<div class="t" style="left:1065.3px;top:471.6px;font-size:11.5px;color:#1b1b1b;letter-spacing:0.18px">Simplify Model</div>
<div class="a" style="left:1039px;top:489.7px;width:225px;height:1px;background:#dcdcdc"></div>
<div class="t" style="left:1065.3px;top:499.2px;font-size:11.5px;color:#a6a6a6;letter-spacing:0.18px">Mesh boolean</div>
<div class="t" style="left:1065.3px;top:518.6px;font-size:11.5px;color:#a6a6a6;letter-spacing:0.18px">Center</div>
<div class="t" style="left:1065.3px;top:538.2px;font-size:11.5px;color:#a6a6a6;letter-spacing:0.18px">Split</div>
<svg style="left:1252.5px;top:538.1px" width="6" height="10" viewBox="0 0 6 10"><polyline points="1,1 5,5 1,9" fill="none" stroke="#b0b0b0" stroke-width="1"/></svg>
<div class="t" style="left:1065.3px;top:557.7px;font-size:11.5px;color:#1b1b1b;letter-spacing:0.18px">Mirror</div>
<svg style="left:1252.5px;top:557.6px" width="6" height="10" viewBox="0 0 6 10"><polyline points="1,1 5,5 1,9" fill="none" stroke="#222" stroke-width="1.4"/></svg>
<div class="t" style="left:1065.3px;top:577.3px;font-size:11.5px;color:#1b1b1b;letter-spacing:0.18px">Delete</div>
<div class="t" style="right:458px;top:577.3px;font-size:11.5px;color:#1b1b1b">Del</div>
<div class="a" style="left:1039px;top:595.5px;width:225px;height:1px;background:#dcdcdc"></div>
<div class="t" style="left:1065.3px;top:605.1px;font-size:11.5px;color:#1b1b1b;letter-spacing:0.18px">Add part</div>
<svg style="left:1252.5px;top:605.0px" width="6" height="10" viewBox="0 0 6 10"><polyline points="1,1 5,5 1,9" fill="none" stroke="#222" stroke-width="1.4"/></svg>
<div class="t" style="left:1065.3px;top:624.6px;font-size:11.5px;color:#1b1b1b;letter-spacing:0.18px">Add negative part</div>
<svg style="left:1252.5px;top:624.5px" width="6" height="10" viewBox="0 0 6 10"><polyline points="1,1 5,5 1,9" fill="none" stroke="#222" stroke-width="1.4"/></svg>
<div class="t" style="left:1065.3px;top:644.1px;font-size:11.5px;color:#1b1b1b;letter-spacing:0.18px">Add modifier</div>
<svg style="left:1252.5px;top:644.0px" width="6" height="10" viewBox="0 0 6 10"><polyline points="1,1 5,5 1,9" fill="none" stroke="#222" stroke-width="1.4"/></svg>
<div class="t" style="left:1065.3px;top:663.6px;font-size:11.5px;color:#1b1b1b;letter-spacing:0.18px">Add support blocker</div>
<svg style="left:1252.5px;top:663.5px" width="6" height="10" viewBox="0 0 6 10"><polyline points="1,1 5,5 1,9" fill="none" stroke="#222" stroke-width="1.4"/></svg>
<div class="t" style="left:1065.3px;top:683.1px;font-size:11.5px;color:#1b1b1b;letter-spacing:0.18px">Add support enforcer</div>
<svg style="left:1252.5px;top:683.0px" width="6" height="10" viewBox="0 0 6 10"><polyline points="1,1 5,5 1,9" fill="none" stroke="#222" stroke-width="1.4"/></svg>
<div class="t" style="left:1065.3px;top:702.6px;font-size:11.5px;color:#1b1b1b;letter-spacing:0.18px">Height range Modifier</div>
<div class="a" style="left:1039px;top:720.8px;width:225px;height:1px;background:#dcdcdc"></div>
<div class="t" style="left:1065.3px;top:730.3px;font-size:11.5px;color:#1b1b1b;letter-spacing:0.18px">Printable</div>
<div class="t" style="left:1065.3px;top:749.8px;font-size:11.5px;color:#1b1b1b;letter-spacing:0.18px">Edit Process Settings</div>
<div class="t" style="left:1065.3px;top:769.3px;font-size:11.5px;color:#1b1b1b;letter-spacing:0.18px">Edit in Parameter Table</div>
<div class="a" style="left:1039px;top:787.0px;width:225px;height:1px;background:#dcdcdc"></div>
<div class="t" style="left:1065.3px;top:796.7px;font-size:11.5px;color:#a6a6a6;letter-spacing:0.18px">Reload from disk</div>
<div class="t" style="left:1065.3px;top:816.2px;font-size:11.5px;color:#1b1b1b;letter-spacing:0.18px">Replace with STL</div>
<div class="t" style="left:1065.3px;top:835.7px;font-size:11.5px;color:#1b1b1b;letter-spacing:0.18px">Export as one STL</div>
<div class="t" style="left:1065.3px;top:855.2px;font-size:11.5px;color:#1b1b1b;letter-spacing:0.18px">Convert from inch</div>
<div class="t" style="left:1065.3px;top:874.7px;font-size:11.5px;color:#1b1b1b;letter-spacing:0.18px">Convert from meter</div>
<svg style="left:1036px;top:600px" width="22" height="142" viewBox="1036 600 22 142">
 <g fill="none" stroke="#777" stroke-width="1.1">
  <path d="M1044.5,606.8 H1040.6 Q1039.3,606.8 1039.3,608.1 V615.3 Q1039.3,616.6 1040.6,616.6 H1048.4 Q1049.7,616.6 1049.7,615.3 V611.5"/>
  <path d="M1044.5,625.7 H1040.6 Q1039.3,625.7 1039.3,627 V634.2 Q1039.3,635.5 1040.6,635.5 H1048.4 Q1049.7,635.5 1049.7,634.2 V630.5"/>
  <path d="M1044.5,645.2 H1040.6 Q1039.3,645.2 1039.3,646.5 V653.7 Q1039.3,655 1040.6,655 H1048.4 Q1049.7,655 1049.7,653.7 V650"/>
  <path d="M1039.5,663 Q1045,669 1050.5,663" />
  <path d="M1039.8,683 Q1045,689 1050.5,683" />
 </g>
 <g fill="none" stroke="#4479f7" stroke-width="1.1">
  <path d="M1050,603.3 V610 M1046.6,606.7 H1053.3"/>
  <path d="M1046.6,625.7 H1053.3"/>
  <rect x="1039.6" y="667" width="10.8" height="7.8" stroke-dasharray="1.6,1.2"/>
  <path d="M1039.6,668 L1045,671.5 L1050.4,668" stroke-dasharray="1.6,1.2"/>
  <rect x="1039.8" y="686.2" width="10.6" height="7.2" rx="0.8"/>
  <path d="M1039.8,686.5 L1045,690 L1050.4,686.5"/>
 </g>
 <circle cx="1049.6" cy="645.5" r="3.3" fill="#4479f7"/>
 <path d="M1042.6,734.6 L1045.2,737.2 L1050.6,731.8" fill="none" stroke="#444" stroke-width="1.1"/>
</svg>
<!-- red box 2 -->
<div class="a" style="left:1021.5px;top:387.4px;width:257px;height:506.5px;border:3.1px solid #f8170f;border-radius:4px"></div>
<div id="content"></div>
</body></html>
